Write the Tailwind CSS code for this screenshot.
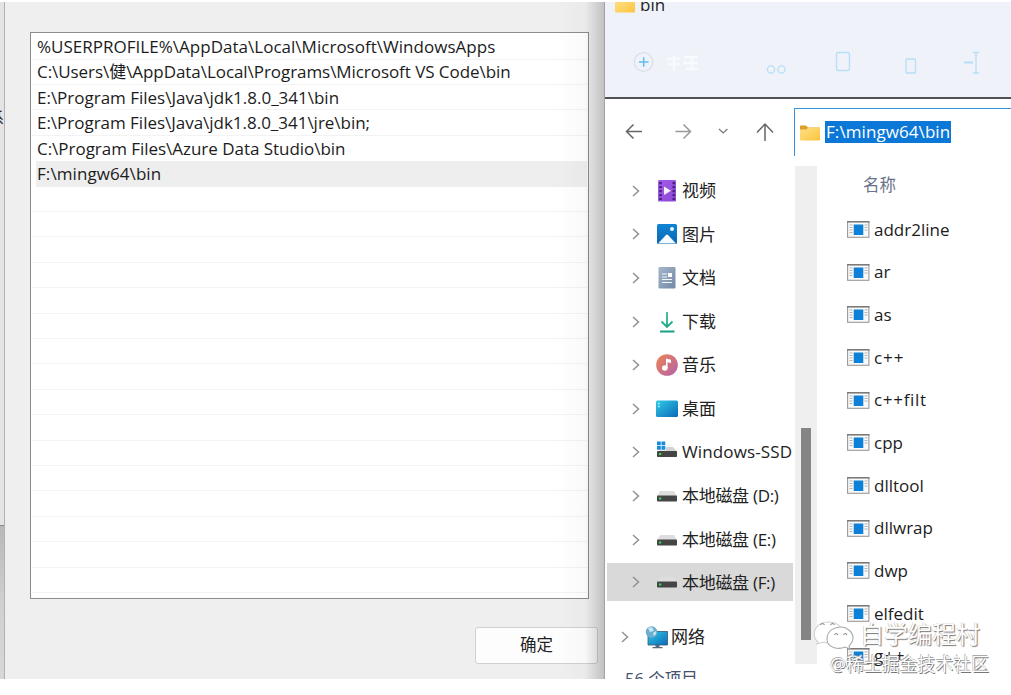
<!DOCTYPE html>
<html lang="zh-CN">
<head>
<meta charset="utf-8">
<title>bin</title>
<script src="https://cdn.jsdelivr.net/npm/@tailwindcss/browser@4"></script>
</head>
<body class="h-[695px] w-[1011px] overflow-hidden bg-white pt-[2px] font-['Open_Sans','Noto_Sans_CJK_SC',sans-serif] text-[17px] text-[#222]">
<svg class="absolute size-0">
  <defs>
    <linearGradient id="gf" x1="0" y1="0" x2="1" y2="1"><stop offset="0" stop-color="#ffe08a"/><stop offset="1" stop-color="#fbc53c"/></linearGradient>
    <linearGradient id="gv" x1="0" y1="0" x2="1" y2="1"><stop offset="0" stop-color="#a45be8"/><stop offset="1" stop-color="#8a49d6"/></linearGradient>
    <linearGradient id="gp" x1="0" y1="0" x2="0" y2="1"><stop offset="0" stop-color="#0f84d2"/><stop offset="1" stop-color="#0b66b4"/></linearGradient>
    <linearGradient id="gd" x1="0" y1="0" x2="1" y2="1"><stop offset="0" stop-color="#a5b7ca"/><stop offset="1" stop-color="#7288a6"/></linearGradient>
    <linearGradient id="gm" x1="0" y1="0" x2="1" y2="1"><stop offset="0" stop-color="#ee8552"/><stop offset="1" stop-color="#b260ac"/></linearGradient>
    <linearGradient id="gk" x1="0" y1="0" x2="1" y2="1"><stop offset="0" stop-color="#31cbe6"/><stop offset="1" stop-color="#0a69b8"/></linearGradient>
    <linearGradient id="ga" x1="0" y1="0" x2="1" y2="1"><stop offset="0" stop-color="#0f7fd2"/><stop offset="1" stop-color="#0a83de"/></linearGradient>
    <linearGradient id="gw" x1="0" y1="0" x2="0" y2="22" gradientUnits="userSpaceOnUse"><stop offset="0" stop-color="#38bb97"/><stop offset="1" stop-color="#13a084"/></linearGradient>
  </defs>
  <symbol id="chev" viewBox="0 0 8 12"><path d="M1 1l5.500 5L1 11" fill="none" stroke="#929292" stroke-width="1.500"/></symbol>
  <symbol id="folder" viewBox="0 0 20 16"><path d="M0 1.500Q0 .5 1 .5h5l2 2h11q1 0 1 1V8H0z" fill="#dca02a"/><path d="M0 4.500h6.500l1.500-2h11q1 0 1 1v11q0 1-1 1H1q-1 0-1-1z" fill="url(#gf)"/></symbol>
  <symbol id="video" viewBox="0 0 22 22"><rect x="2" y="0" width="18" height="21.500" rx="1.200" fill="url(#gv)"/><path d="M4.500 2v18M17.800 2v18" stroke="#49227b" stroke-width="2.600" stroke-dasharray="2.200 1.800"/><path d="M8 6.500l7 4.300-7 4.300z" fill="#f7eefe"/></symbol>
  <symbol id="pic" viewBox="0 0 22 22"><rect x="1" y="1" width="20" height="20" rx="1.500" fill="url(#gp)"/><path d="M2 20.500l8-8.500q1-1 2 0l8 8.500z" fill="#f6fbff"/><circle cx="16" cy="6" r="2" fill="#e5f7ff"/></symbol>
  <symbol id="doc" viewBox="0 0 22 22"><rect x="2.500" y="0" width="17" height="21.500" rx="1.200" fill="url(#gd)"/><path d="M6 7h5M6 10h5M6 12.500h10M6 15.500h10" stroke="#f2f7fc" stroke-width="1.100"/><rect x="12" y="6" width="4" height="4" fill="#fff"/></symbol>
  <symbol id="down" viewBox="0 0 22 22"><path d="M11 1v15M5.500 10.500l5.500 5.500 5.500-5.500M4 20.500h14.500" fill="none" stroke="url(#gw)" stroke-width="1.800"/></symbol>
  <symbol id="music" viewBox="0 0 22 22"><circle cx="11" cy="11" r="10.800" fill="url(#gm)"/><path d="M10 14V4.500l5 1.200V9l-3.500-.8V14z" fill="#fff"/><circle cx="8.800" cy="14" r="2.800" fill="#fff"/></symbol>
  <symbol id="desk" viewBox="0 0 22 22"><rect x="0" y="2.500" width="22" height="16.500" rx="1.500" fill="url(#gk)"/><path d="M2.200 5.500h1.300M2.200 8.500h1.300" stroke="#e9fcff" stroke-width="1.300"/></symbol>
  <symbol id="drive" viewBox="0 0 22 22"><path d="M4 6h14l3 5.500H1z" fill="#dedede"/><rect x="1" y="10.500" width="20" height="6" rx=".8" fill="#454545"/><rect x="3" y="12.500" width="2.200" height="2" fill="#35e04c"/></symbol>
  <symbol id="win" viewBox="0 0 22 22"><path d="M6 6h11l4 4.500v1H1z" fill="#d4d4d4"/><rect x="1" y="10" width="20" height="6" rx=".8" fill="#454545"/><rect x="3" y="12" width="2.200" height="2" fill="#35e04c"/><path d="M0 0h10v9.500H0z" fill="#fff"/><path d="M1 .5h3.800v3.800H1zM5.500.5h3.800v3.800H5.500zM1 5h3.800v3.800H1zM5.500 5h3.800v3.800H5.500z" fill="#168bdb"/></symbol>
  <symbol id="net" viewBox="0 0 24 24"><path d="M3 6.500h19.500v13.500H3z" fill="url(#gk)" stroke="#315a75" stroke-width=".8"/><path d="M10.500 20h4v2h3v1.300h-10V22h3z" fill="#536b7c"/><circle cx="6.500" cy="7" r="5.800" fill="#6caecf"/><path d="M3 3.500q3-3 5 0t-3 3.500zM8 8l3-2q1 3-2 5z" fill="#c8e7f4"/></symbol>
  <symbol id="app" viewBox="0 0 23 17"><rect x=".6" y=".6" width="21.300" height="15.700" fill="#fafafa" stroke="#999" stroke-width="1.100"/><path d="M0 .8h22.500" stroke="#777" stroke-width="1.400"/><path d="M2.500 4h3M2.500 6.500h3M2.500 9h3M2.500 11.500h3M17.500 4h3M17.500 6.500h3M17.500 9h3" stroke="#b3b3b3" stroke-width="1"/><rect x="6.700" y="3.500" width="9.600" height="10.500" fill="url(#ga)"/></symbol>
</svg>

<main class="relative flex h-[677px]">
  <!-- Strip of the window behind -->
  <div class="flex w-[4px] shrink-0 flex-col overflow-hidden bg-[#e4e4e4]">
    <div class="h-[107px]"></div>
    <div class="flex h-[18px] w-[4px] justify-end overflow-hidden text-[15px] leading-[16px]"><span class="shrink-0">系</span></div>
    <div class="h-[399px] border-b border-[#888]"></div>
    <div class="flex-1 bg-linear-to-b from-[#b8b8b8] via-[#d0d0d0] to-[#d8d8d8]"></div>
  </div>
  <!-- Path editor dialog -->
  <section class="relative flex w-[601px] shrink-0 flex-col border-l border-[#b0b0b0] bg-[#efefef] pt-[30px] pl-[25px]">
    <div class="h-[567px] w-[559px] shrink-0 border border-[#8c8c8c] bg-white px-px pt-[1.3px] text-[#1c1c1c]">
      <div class="flex h-[25.4px] items-center border-b border-[#f3f3f3] pl-[5px]"><span class="whitespace-pre tracking-[0.02px]">%USERPROFILE%\AppData\Local\Microsoft\WindowsApps</span></div>
      <div class="flex h-[25.4px] items-center border-b border-[#f3f3f3] pl-[5px]"><span class="whitespace-pre tracking-[-0.06px]">C:\Users\健\AppData\Local\Programs\Microsoft VS Code\bin</span></div>
      <div class="flex h-[25.4px] items-center border-b border-[#f3f3f3] pl-[5px]"><span class="whitespace-pre tracking-[-0.01px]">E:\Program Files\Java\jdk1.8.0_341\bin</span></div>
      <div class="flex h-[25.4px] items-center border-b border-[#f3f3f3] pl-[5px]"><span class="whitespace-pre tracking-[-0.02px]">E:\Program Files\Java\jdk1.8.0_341\jre\bin;</span></div>
      <div class="flex h-[25.4px] items-center pl-[5px]"><span class="whitespace-pre tracking-[-0.03px]">C:\Program Files\Azure Data Studio\bin</span></div>
      <div class="ml-[4px] flex h-[25.4px] items-center bg-[#eeeeee] pl-[1px]"><span class="whitespace-pre tracking-[0.08px]">F:\mingw64\bin</span></div>
      <div class="h-[25.4px] border-b border-[#f3f3f3]"></div>
      <div class="h-[25.4px] border-b border-[#f3f3f3]"></div>
      <div class="h-[25.4px] border-b border-[#f3f3f3]"></div>
      <div class="h-[25.4px] border-b border-[#f3f3f3]"></div>
      <div class="h-[25.4px] border-b border-[#f3f3f3]"></div>
      <div class="h-[25.4px] border-b border-[#f3f3f3]"></div>
      <div class="h-[25.4px] border-b border-[#f3f3f3]"></div>
      <div class="h-[25.4px] border-b border-[#f3f3f3]"></div>
      <div class="h-[25.4px] border-b border-[#f3f3f3]"></div>
      <div class="h-[25.4px] border-b border-[#f3f3f3]"></div>
      <div class="h-[25.4px] border-b border-[#f3f3f3]"></div>
      <div class="h-[25.4px] border-b border-[#f3f3f3]"></div>
      <div class="h-[25.4px] border-b border-[#f3f3f3]"></div>
      <div class="h-[25.4px] border-b border-[#f3f3f3]"></div>
      <div class="h-[25.4px] border-b border-[#f3f3f3]"></div>
      <div class="h-[25.4px] border-b border-[#f3f3f3]"></div>
    </div>
    <button class="mt-[28px] ml-[445px] flex h-[37px] w-[123px] items-center justify-center rounded-[3px] border border-[#d0d0d0] bg-[#fdfdfd] text-[16.5px]">确定</button>
    <div class="absolute inset-y-0 right-0 w-[50px] bg-linear-to-r from-black/0 via-black/2 via-60% to-black/20"></div>
    <div class="absolute inset-y-0 right-0 w-px bg-[#a3a3a3]"></div>
  </section>

  <!-- File explorer -->
  <section class="flex min-w-0 flex-1 flex-col bg-white">
    <header class="flex h-[97px] shrink-0 flex-col border-b-2 border-[#505256] bg-[#eff3f9]">
      <div class="flex h-[14px] shrink-0 items-end overflow-hidden pb-[3px] pl-[10px]">
        <svg class="mr-[5px] h-[16px] w-[20px] shrink-0"><use href="#folder"/></svg>
        <span class="h-[20px] shrink-0 leading-[23px]">bin</span>
      </div>
      <svg class="h-[60px] w-[406px] shrink-0" viewBox="605 16 406 60" fill="none">
        <circle cx="643.500" cy="62" r="9.300" stroke="#dbe0e6" stroke-width="1.300"/><path d="M639 62h9.500M643.700 57.300v9.500" stroke="#5fbdf0" stroke-width="1.500"/>
        <g stroke="#f8fbfe" stroke-width="2.500"><path d="M667 59h13M668 64h12M674 56v15M684 57h14M683 63h15M686 69h12M692 56v14"/></g>
        <g stroke="#b7def6" stroke-width="1.300"><circle cx="771" cy="69.500" r="3.600"/><circle cx="781.500" cy="69.500" r="3.600"/><rect x="836.500" y="52.500" width="13" height="18" rx="2"/><rect x="906" y="59" width="9.500" height="14" rx="1"/><path d="M973 52.500h6M976 52.500v20.500M973 73h6"/><path d="M964 62.500h9" stroke-width="2"/></g>
      </svg>
    </header>
    <div class="flex h-[57px] shrink-0 pt-[9px]">
      <svg class="h-[48px] w-[189px] shrink-0" viewBox="605 108 189 48" fill="none" stroke="#666" stroke-width="1.500">
        <path d="M642 131.500h-15.500M633.500 124.500l-7 7 7 7"/><path d="M675.500 131.500h15M683.500 124.500l7 7-7 7" stroke="#999"/><path d="M719 129l4.200 4 4.200-4" stroke="#777" stroke-width="1.200"/><path d="M765 141v-16.500M757 132.500l8-8.500 8 8.500"/>
      </svg>
      <div class="flex h-[48px] flex-1 items-center border-t border-l border-[#3791d8] pl-[5px]">
        <svg class="mr-[5px] h-[16px] w-[20px] shrink-0"><use href="#folder"/></svg>
        <span class="mb-px flex h-[22px] items-center bg-[#0b78d7] pr-px pl-px tracking-[0.08px] whitespace-pre text-white">F:\mingw64\bin</span>
      </div>
    </div>
    <div class="flex min-h-0 flex-1">
      <nav class="flex w-[190px] shrink-0 flex-col overflow-hidden pt-[13px] pl-[2px]">
        <div class="flex h-[43.600px] shrink-0 items-center pl-[25px]"><svg class="h-[12px] w-[8px]"><use href="#chev"/></svg><svg class="mr-[4px] ml-[16px] h-[22px] w-[22px]"><use href="#video"/></svg>视频</div>
        <div class="flex h-[43.600px] shrink-0 items-center pl-[25px]"><svg class="h-[12px] w-[8px]"><use href="#chev"/></svg><svg class="mr-[4px] ml-[16px] h-[22px] w-[22px]"><use href="#pic"/></svg>图片</div>
        <div class="flex h-[43.600px] shrink-0 items-center pl-[25px]"><svg class="h-[12px] w-[8px]"><use href="#chev"/></svg><svg class="mr-[4px] ml-[16px] h-[22px] w-[22px]"><use href="#doc"/></svg>文档</div>
        <div class="flex h-[43.600px] shrink-0 items-center pl-[25px]"><svg class="h-[12px] w-[8px]"><use href="#chev"/></svg><svg class="mr-[4px] ml-[16px] h-[22px] w-[22px]"><use href="#down"/></svg>下载</div>
        <div class="flex h-[43.600px] shrink-0 items-center pl-[25px]"><svg class="h-[12px] w-[8px]"><use href="#chev"/></svg><svg class="mr-[4px] ml-[16px] h-[22px] w-[22px]"><use href="#music"/></svg>音乐</div>
        <div class="flex h-[43.600px] shrink-0 items-center pl-[25px]"><svg class="h-[12px] w-[8px]"><use href="#chev"/></svg><svg class="mr-[4px] ml-[16px] h-[22px] w-[22px]"><use href="#desk"/></svg>桌面</div>
        <div class="flex h-[43.600px] shrink-0 items-center pl-[25px] whitespace-nowrap"><svg class="h-[12px] w-[8px] shrink-0"><use href="#chev"/></svg><svg class="mr-[4px] ml-[16px] h-[22px] w-[22px] shrink-0"><use href="#win"/></svg><span class="pb-px tracking-[0.12px]">Windows-SSD</span></div>
        <div class="flex h-[43.600px] shrink-0 items-center pl-[25px]"><svg class="h-[12px] w-[8px]"><use href="#chev"/></svg><svg class="mr-[4px] ml-[16px] h-[22px] w-[22px]"><use href="#drive"/></svg><span class="tracking-[-0.3px]">本地磁盘 (D:)</span></div>
        <div class="flex h-[43.600px] shrink-0 items-center pl-[25px]"><svg class="h-[12px] w-[8px]"><use href="#chev"/></svg><svg class="mr-[4px] ml-[16px] h-[22px] w-[22px]"><use href="#drive"/></svg><span class="tracking-[-0.3px]">本地磁盘 (E:)</span></div>
        <div class="mt-[2px] flex h-[38px] w-[186px] shrink-0 items-center bg-[#d9d9d9] pl-[25px]"><svg class="h-[12px] w-[8px]"><use href="#chev"/></svg><svg class="mr-[4px] ml-[16px] h-[22px] w-[22px]"><use href="#drive"/></svg><span class="tracking-[-0.3px]">本地磁盘 (F:)</span></div>
        <div class="mt-[14px] flex h-[43px] shrink-0 items-center pl-[14px]"><svg class="h-[12px] w-[8px]"><use href="#chev"/></svg><svg class="mr-[2px] ml-[16px] h-[24px] w-[24px]"><use href="#net"/></svg>网络</div>
        <div class="mt-[9px] shrink-0 pl-[18px] text-[16.500px] leading-[24px] text-[#44506e]">56 个项目</div>
      </nav>
      <div class="mt-[10px] h-[498px] w-[22px] shrink-0 bg-[#efefef] pt-[262px] pl-[6px]"><div class="h-[212px] w-[10px] bg-[#858585]"></div></div>
      <div class="flex flex-1 flex-col overflow-hidden pl-[30px] text-[#1c1c1c]">
        <div class="flex h-[52px] shrink-0 items-center pt-[6px] pl-[16px] text-[16.500px] text-[#687389]">名称</div>
        <div class="flex h-[42.700px] shrink-0 items-center gap-[4px]"><svg class="h-[17px] w-[23px]"><use href="#app"/></svg>addr2line</div>
        <div class="flex h-[42.700px] shrink-0 items-center gap-[4px]"><svg class="h-[17px] w-[23px]"><use href="#app"/></svg>ar</div>
        <div class="flex h-[42.700px] shrink-0 items-center gap-[4px]"><svg class="h-[17px] w-[23px]"><use href="#app"/></svg>as</div>
        <div class="flex h-[42.700px] shrink-0 items-center gap-[4px]"><svg class="h-[17px] w-[23px]"><use href="#app"/></svg><span class="tracking-[0.9px]">c++</span></div>
        <div class="flex h-[42.700px] shrink-0 items-center gap-[4px]"><svg class="h-[17px] w-[23px]"><use href="#app"/></svg><span class="tracking-[0.7px]">c++filt</span></div>
        <div class="flex h-[42.700px] shrink-0 items-center gap-[4px]"><svg class="h-[17px] w-[23px]"><use href="#app"/></svg>cpp</div>
        <div class="flex h-[42.700px] shrink-0 items-center gap-[4px]"><svg class="h-[17px] w-[23px]"><use href="#app"/></svg>dlltool</div>
        <div class="flex h-[42.700px] shrink-0 items-center gap-[4px]"><svg class="h-[17px] w-[23px]"><use href="#app"/></svg>dllwrap</div>
        <div class="flex h-[42.700px] shrink-0 items-center gap-[4px]"><svg class="h-[17px] w-[23px]"><use href="#app"/></svg>dwp</div>
        <div class="flex h-[42.700px] shrink-0 items-center gap-[4px]"><svg class="h-[17px] w-[23px]"><use href="#app"/></svg>elfedit</div>
        <div class="flex h-[42.700px] shrink-0 items-center gap-[4px]"><svg class="h-[17px] w-[23px]"><use href="#app"/></svg><span class="tracking-[0.9px]">g++</span></div>
      </div>
    </div>
  </section>

  <!-- Watermarks -->
  <svg class="absolute top-[617px] left-[812px] h-[34px] w-[42px]" viewBox="812 619 42 34" fill="#ffffff" stroke="#aaa" stroke-width="1.100">
    <path d="M818 642l-2-2c-5-8 1-18 12-18s18 8 13 16c-4 6-12 6-17 4l-7 2z" fill-opacity=".85" stroke="#d0d0d0"/><path d="M845 647c-6 3-18 1-18-8s8-12 14-12 12 5 12 11c0 4-2 6-4 8l1 3z"/><path d="M820.500 625q2-3 4 0M830.500 625q2-3 4 0M834.500 635q2-3 3.500 0M843.500 635q2-3 3.500 0" fill="none" stroke="#888"/>
  </svg>
  <span class="absolute top-[614px] left-[860px] text-[24px] leading-[36px] whitespace-nowrap text-white [text-shadow:1px_1px_1px_#777,-0.5px_-0.5px_0.5px_#bbb]">自学编程村</span>
  <span class="absolute top-[649px] left-[830px] text-[17.9px] leading-[26px] whitespace-nowrap text-white [text-shadow:0.7px_0.7px_0.5px_#777,-0.6px_-0.6px_0.5px_#aaa]">@稀土掘金技术社区</span>
</main>
</body>
</html>
